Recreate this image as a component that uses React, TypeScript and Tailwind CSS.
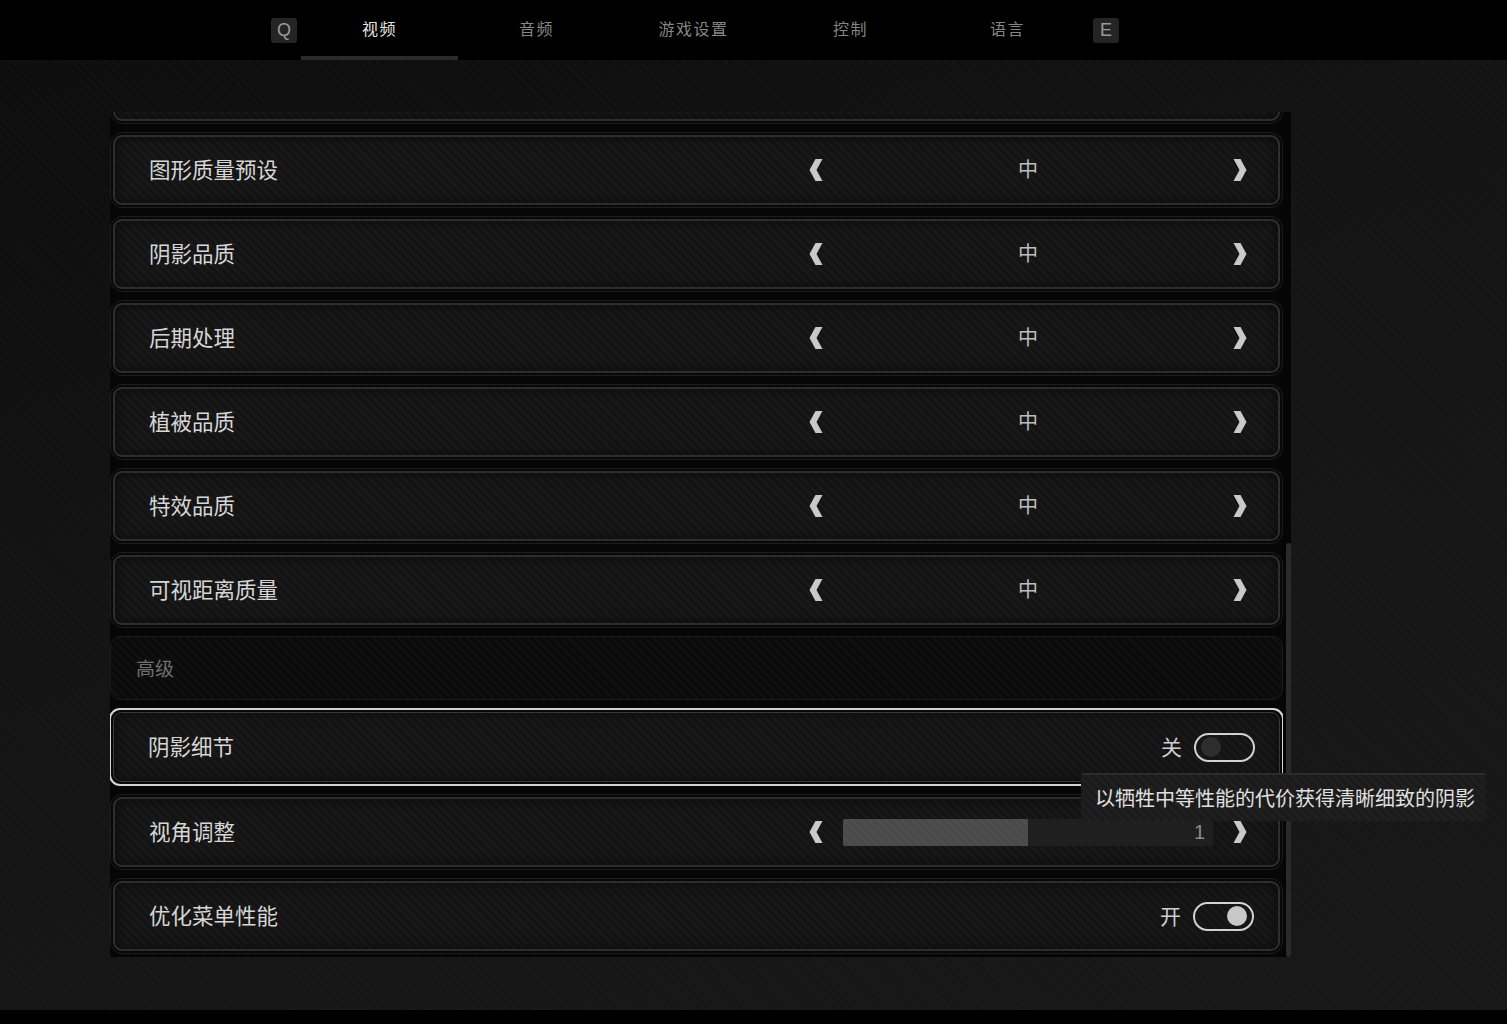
import React from "react";

const stripes =
  "bg-[image:repeating-linear-gradient(45deg,rgba(255,255,255,0.025)_0px,rgba(255,255,255,0.025)_2px,transparent_2px,transparent_6px)]";

type Row =
  | { kind: "select"; label: string; value: string }
  | { kind: "toggle"; label: string; on: boolean; selected?: boolean }
  | { kind: "slider"; label: string; value: number; pct: number }
  | { kind: "header"; label: string };

const rows: Row[] = [
  { kind: "select", label: "纹理品质", value: "中" },
  { kind: "select", label: "图形质量预设", value: "中" },
  { kind: "select", label: "阴影品质", value: "中" },
  { kind: "select", label: "后期处理", value: "中" },
  { kind: "select", label: "植被品质", value: "中" },
  { kind: "select", label: "特效品质", value: "中" },
  { kind: "select", label: "可视距离质量", value: "中" },
  { kind: "header", label: "高级" },
  { kind: "toggle", label: "阴影细节", on: false, selected: true },
  { kind: "slider", label: "视角调整", value: 1, pct: 50 },
  { kind: "toggle", label: "优化菜单性能", on: true },
];

const tabs = ["视频", "音频", "游戏设置", "控制", "语言"];

function Chevron({ dir }: { dir: "left" | "right" }) {
  return (
    <svg width="14" height="24" viewBox="0 0 14 24" className="shrink-0">
      {dir === "left" ? (
        <path d="M13.5 1 L6.5 1 L0.5 12 L6.5 23 L13.5 23 L7.5 12 Z" fill="#c9c9c9" />
      ) : (
        <path d="M0.5 1 L7.5 1 L13.5 12 L7.5 23 L0.5 23 L6.5 12 Z" fill="#c9c9c9" />
      )}
    </svg>
  );
}

function Toggle({ on }: { on: boolean }) {
  return (
    <div className="flex items-center gap-[12px]">
      <span className="text-[21px] text-[#cfcfcf] leading-none -mt-[2px]">{on ? "开" : "关"}</span>
      <div
        className={`w-[61px] h-[29px] rounded-full border-2 border-[#d2d2d2] flex items-center px-[5px] ${
          on ? "justify-end" : "justify-start"
        }`}
      >
        <div className={`w-[20px] h-[20px] rounded-full ${on ? "bg-[#c8c8c8]" : "bg-[#2e2e2e]"}`} />
      </div>
    </div>
  );
}

function RowBody({ row }: { row: Row }) {
  if (row.kind === "header") return null;
  return (
    <div className={`h-full flex items-center pl-[34px] ${row.kind === "toggle" ? "pr-[24px]" : "pr-[31px]"}`}>
      <span className="text-[21.5px] text-[#d6d6d6] flex-1 leading-none -mt-[3px]">{row.label}</span>
      {row.kind === "select" && (
        <div className="w-[438px] flex items-center">
          <Chevron dir="left" />
          <div className="flex-1 text-center text-[20px] text-[#bdbdbd] leading-none -mt-[2px]">{row.value}</div>
          <Chevron dir="right" />
        </div>
      )}
      {row.kind === "slider" && (
        <div className="w-[438px] flex items-center">
          <Chevron dir="left" />
          <div className="flex-1 px-[20px]">
            <div className="relative h-[27px] bg-[#1f1f1f] rounded-[2px] flex items-center justify-end pr-[8px]">
              <div
                className={`absolute left-0 top-0 h-full bg-[#4a4a4a] rounded-l-[2px] ${stripes}`}
                style={{ width: `${row.pct}%` }}
              />
              <span className="relative text-[20px] text-[#8a8a8a] font-['Liberation_Sans',sans-serif]">
                {row.value}
              </span>
            </div>
          </div>
          <Chevron dir="right" />
        </div>
      )}
      {row.kind === "toggle" && <Toggle on={row.on} />}
    </div>
  );
}

function SettingRow({ row, clipped }: { row: Row; clipped?: boolean }) {
  if (row.kind === "header") {
    return (
      <div className={`shrink-0 h-[64px] rounded-[10px] border border-[#1b1b1b] bg-[#0b0b0b] flex items-center pl-[25px] ${stripes}`}>
        <span className="text-[19px] text-[#6f6f6f] leading-none -mt-[2px]">{row.label}</span>
      </div>
    );
  }
  const selected = row.kind === "toggle" && row.selected;
  return (
    <div
      className={`shrink-0 ${clipped ? "-mt-[64px]" : ""} ${
        selected
          ? "border-2 border-[#d4d4d4] rounded-[11px] p-[2px] -mx-[1px]"
          : "border border-[#1d1d1d] rounded-[12px] p-[2px]"
      } bg-[#080808]`}
    >
      <div
        className={`h-[70px] ${selected ? "border border-[#3a3a3a]" : "border-2 border-[#2e2e2e]"} rounded-[9px] bg-[#141414] ${stripes} shadow-[inset_0_0_12px_rgba(0,0,0,0.6)]`}
      >
        {/* the row scrolled above the top shows only its bottom edge */}
        {!clipped && <RowBody row={row} />}
      </div>
    </div>
  );
}

export default function App() {
  return (
    <div className="w-full h-[1024px] bg-black flex flex-col font-['Noto_Sans_CJK_SC','Noto_Sans',sans-serif] overflow-hidden">
      {/* top tab bar */}
      <div className="h-[60px] shrink-0 bg-black flex items-stretch pl-[271px]">
        <div className="flex items-center">
          <div className="w-[26px] h-[25px] bg-[#242424] rounded-[3px] flex items-center justify-center text-[18px] text-[#9a9a9a] font-['Liberation_Sans',sans-serif]">
            Q
          </div>
        </div>
        <div className="flex ml-[4px]">
          {tabs.map((t, i) => (
            <div
              key={t}
              className={`w-[157px] flex items-center justify-center text-[16px] tracking-[1.5px] border-b-4 ${
                i === 0 ? "text-[#e2e2e2] border-[#2b2b2b]" : "text-[#858585] border-transparent"
              }`}
            >
              <span className="-mt-[1px]">{t}</span>
            </div>
          ))}
        </div>
        <div className="flex items-center ml-[7px]">
          <div className="w-[26px] h-[25px] bg-[#242424] rounded-[3px] flex items-center justify-center text-[18px] text-[#9a9a9a] font-['Liberation_Sans',sans-serif]">
            E
          </div>
        </div>
      </div>

      {/* main panel */}
      <div className="relative flex-1 bg-[linear-gradient(160deg,#0d0d0d_0%,#141414_45%,#181818_100%)]">
        <div className={`absolute inset-0 ${stripes} opacity-50`} />
        <div className="relative pt-[52px] pl-[110px] flex">
          <div className="w-[1173px] h-[845px] overflow-hidden bg-[#060606] flex flex-col gap-[8px]">
            {rows.map((r, i) => (
              <SettingRow key={r.label} row={r} clipped={i === 0} />
            ))}
          </div>
          <div className="w-[8px] h-[845px] bg-[#050505] flex flex-col pl-[3px]">
            <div className="mt-[431px] flex-1 bg-[#2a2a2a] rounded-[2px]" />
          </div>
        </div>

        {/* tooltip */}
        <div
          className={`absolute left-[1081px] top-[713px] w-[405px] h-[48px] bg-[#1b1b1b] border-t-2 border-[#2c2c2c] rounded-[3px] flex items-center pl-[14px] ${stripes}`}
        >
          <span className="text-[20px] text-[#e0e0e0] whitespace-nowrap">以牺牲中等性能的代价获得清晰细致的阴影</span>
        </div>
      </div>
      <div className="h-[14px] shrink-0 bg-black" />
    </div>
  );
}
